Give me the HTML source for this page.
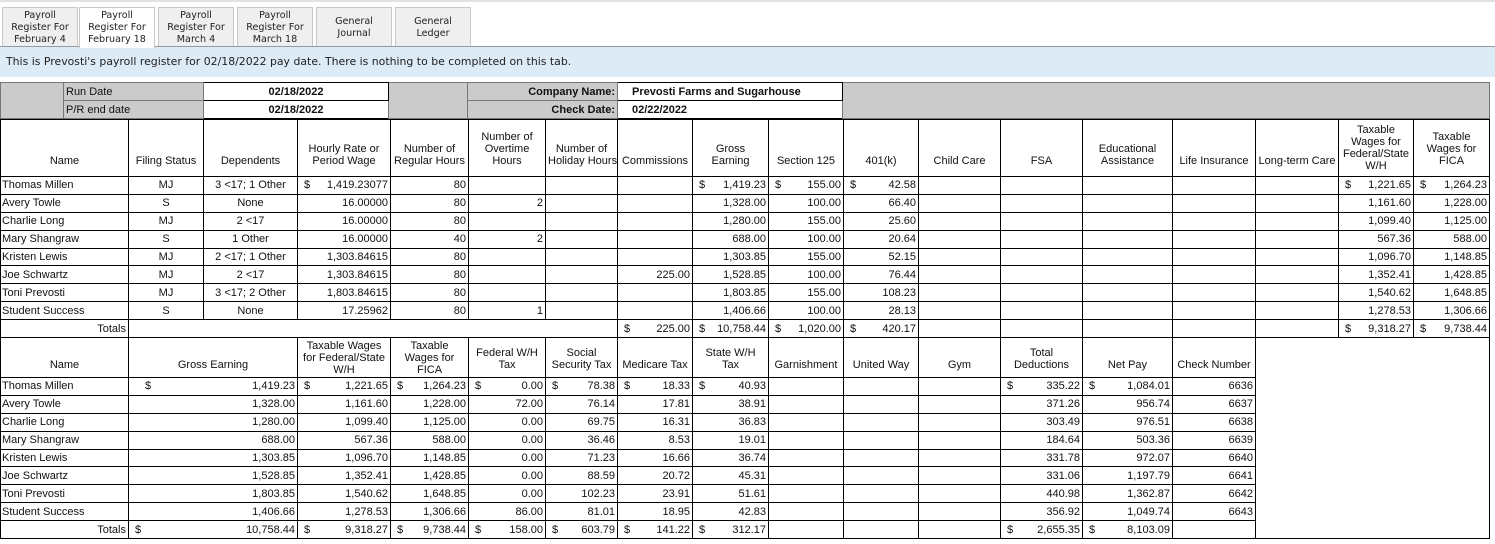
<!DOCTYPE html>
<html><head><meta charset="utf-8"><style>
*{box-sizing:border-box}
body{margin:0;width:1495px;height:544px;overflow:hidden;background:#fff;font-family:"Liberation Sans",Arial,sans-serif;font-size:11px;color:#111}
.topline{position:absolute;left:0;top:0;width:1495px;height:2px;background:#e2e2e2}
.tab{position:absolute;top:7px;height:40px;width:76px;background:#efefef;border:1px solid #c8c8c8;border-bottom:none;font-family:"DejaVu Sans",Verdana,sans-serif;font-size:9.6px;line-height:12px;text-align:center;display:flex;align-items:center;justify-content:center;color:#222}
.tab.act{background:#fff;height:41px;z-index:2}
.bar{position:absolute;left:0;top:46px;width:1495px;height:31px;background:#ddebf7;border-top:1px solid #999;font-family:"DejaVu Sans",Verdana,sans-serif;font-size:10.9px;line-height:30px;padding-left:6px;color:#222}
table{border-collapse:collapse;table-layout:fixed;position:absolute;left:0}
td{border:1px solid #000;padding:0 2px;white-space:nowrap;overflow:hidden}
#h{top:82px;width:1489px}
#h td{height:18px;font-weight:bold}
#h td.r{font-weight:normal}
.g{background:#cbcbcb;border-color:#777}
#m{top:119px;width:1489px}
#m td{height:17.9px;text-align:right}
#m tr.hd td{text-align:center;line-height:12px;vertical-align:bottom}
#m tr.hd1 td{height:57px;padding-bottom:9px}
#m tr.hd1 td.t4{padding-bottom:4px}
#m tr.hd2 td{height:40px;padding-bottom:6px}
#m tr.hd2 td.t3{padding-bottom:1px}
#m td.n{text-align:left;padding-left:1px}
.d{float:left;padding-left:4px}
.c{text-align:center!important}
</style></head><body>
<div class="topline"></div>
<div class="tab" style="left:2px">Payroll<br>Register For<br>February 4</div>
<div class="tab act" style="left:79px">Payroll<br>Register For<br>February 18</div>
<div class="tab" style="left:158px">Payroll<br>Register For<br>March 4</div>
<div class="tab" style="left:237px">Payroll<br>Register For<br>March 18</div>
<div class="tab" style="left:316px">General<br>Journal</div>
<div class="tab" style="left:395px">General<br>Ledger</div>
<div class="bar">This is Prevosti's payroll register for 02/18/2022 pay date. There is nothing to be completed on this tab.</div>

<table id="h">
<colgroup><col style="width:63px"><col style="width:140px"><col style="width:185px"><col style="width:79px"><col style="width:150px"><col style="width:225px"><col style="width:647px"></colgroup>
<tr><td class="g" rowspan="2"></td><td class="g r">Run Date</td><td style="text-align:center">02/18/2022</td><td class="g" rowspan="2"></td><td class="g" style="text-align:right">Company Name:</td><td style="padding-left:14px">Prevosti Farms and Sugarhouse</td><td class="g" rowspan="2"></td></tr>
<tr><td class="g r">P/R end date</td><td style="text-align:center">02/18/2022</td><td class="g" style="text-align:right">Check Date:</td><td style="padding-left:14px">02/22/2022</td></tr>
</table>

<table id="m">
<colgroup><col style="width:128px"><col style="width:75px"><col style="width:94px"><col style="width:93px"><col style="width:78px"><col style="width:77px"><col style="width:72px"><col style="width:75px"><col style="width:76px"><col style="width:75px"><col style="width:75px"><col style="width:82px"><col style="width:82px"><col style="width:90px"><col style="width:83px"><col style="width:83px"><col style="width:75px"><col style="width:76px"></colgroup>
<tr class="hd hd1"><td>Name</td><td>Filing Status</td><td>Dependents</td><td>Hourly Rate or<br>Period Wage</td><td>Number of<br>Regular Hours</td><td>Number of<br>Overtime<br>Hours</td><td>Number of<br>Holiday Hours</td><td>Commissions</td><td>Gross<br>Earning</td><td>Section 125</td><td>401(k)</td><td>Child Care</td><td>FSA</td><td>Educational<br>Assistance</td><td>Life Insurance</td><td>Long-term Care</td><td class="t4">Taxable<br>Wages for<br>Federal/State<br>W/H</td><td>Taxable<br>Wages for<br>FICA</td></tr>
<tr><td class="n">Thomas Millen</td><td class="c">MJ</td><td class="c">3 &lt;17; 1 Other</td><td><span class="d">$</span>1,419.23077</td><td>80</td><td></td><td></td><td></td><td><span class="d">$</span>1,419.23</td><td><span class="d">$</span>155.00</td><td><span class="d">$</span>42.58</td><td></td><td></td><td></td><td></td><td></td><td><span class="d">$</span>1,221.65</td><td><span class="d">$</span>1,264.23</td></tr>
<tr><td class="n">Avery Towle</td><td class="c">S</td><td class="c">None</td><td>16.00000</td><td>80</td><td>2</td><td></td><td></td><td>1,328.00</td><td>100.00</td><td>66.40</td><td></td><td></td><td></td><td></td><td></td><td>1,161.60</td><td>1,228.00</td></tr>
<tr><td class="n">Charlie Long</td><td class="c">MJ</td><td class="c">2 &lt;17</td><td>16.00000</td><td>80</td><td></td><td></td><td></td><td>1,280.00</td><td>155.00</td><td>25.60</td><td></td><td></td><td></td><td></td><td></td><td>1,099.40</td><td>1,125.00</td></tr>
<tr><td class="n">Mary Shangraw</td><td class="c">S</td><td class="c">1 Other</td><td>16.00000</td><td>40</td><td>2</td><td></td><td></td><td>688.00</td><td>100.00</td><td>20.64</td><td></td><td></td><td></td><td></td><td></td><td>567.36</td><td>588.00</td></tr>
<tr><td class="n">Kristen Lewis</td><td class="c">MJ</td><td class="c">2 &lt;17; 1 Other</td><td>1,303.84615</td><td>80</td><td></td><td></td><td></td><td>1,303.85</td><td>155.00</td><td>52.15</td><td></td><td></td><td></td><td></td><td></td><td>1,096.70</td><td>1,148.85</td></tr>
<tr><td class="n">Joe Schwartz</td><td class="c">MJ</td><td class="c">2 &lt;17</td><td>1,303.84615</td><td>80</td><td></td><td></td><td>225.00</td><td>1,528.85</td><td>100.00</td><td>76.44</td><td></td><td></td><td></td><td></td><td></td><td>1,352.41</td><td>1,428.85</td></tr>
<tr><td class="n">Toni Prevosti</td><td class="c">MJ</td><td class="c">3 &lt;17; 2 Other</td><td>1,803.84615</td><td>80</td><td></td><td></td><td></td><td>1,803.85</td><td>155.00</td><td>108.23</td><td></td><td></td><td></td><td></td><td></td><td>1,540.62</td><td>1,648.85</td></tr>
<tr><td class="n">Student Success</td><td class="c">S</td><td class="c">None</td><td>17.25962</td><td>80</td><td>1</td><td></td><td></td><td>1,406.66</td><td>100.00</td><td>28.13</td><td></td><td></td><td></td><td></td><td></td><td>1,278.53</td><td>1,306.66</td></tr>
<tr><td>Totals</td><td colspan="6"></td><td><span class="d">$</span>225.00</td><td><span class="d">$</span>10,758.44</td><td><span class="d">$</span>1,020.00</td><td><span class="d">$</span>420.17</td><td></td><td></td><td></td><td></td><td></td><td><span class="d">$</span>9,318.27</td><td><span class="d">$</span>9,738.44</td></tr>
<tr class="hd hd2"><td>Name</td><td colspan="2">Gross Earning</td><td class="t3">Taxable Wages<br>for Federal/State<br>W/H</td><td class="t3">Taxable<br>Wages for<br>FICA</td><td>Federal W/H<br>Tax</td><td>Social<br>Security Tax</td><td>Medicare Tax</td><td>State W/H<br>Tax</td><td>Garnishment</td><td>United Way</td><td>Gym</td><td>Total<br>Deductions</td><td>Net Pay</td><td>Check Number</td><td colspan="3" rowspan="11"></td></tr>
<tr><td class="n">Thomas Millen</td><td colspan="2"><span class="d" style="padding-left:14px">$</span>1,419.23</td><td><span class="d">$</span>1,221.65</td><td><span class="d">$</span>1,264.23</td><td><span class="d">$</span>0.00</td><td><span class="d">$</span>78.38</td><td><span class="d">$</span>18.33</td><td><span class="d">$</span>40.93</td><td></td><td></td><td></td><td><span class="d">$</span>335.22</td><td><span class="d">$</span>1,084.01</td><td>6636</td></tr>
<tr><td class="n">Avery Towle</td><td colspan="2">1,328.00</td><td>1,161.60</td><td>1,228.00</td><td>72.00</td><td>76.14</td><td>17.81</td><td>38.91</td><td></td><td></td><td></td><td>371.26</td><td>956.74</td><td>6637</td></tr>
<tr><td class="n">Charlie Long</td><td colspan="2">1,280.00</td><td>1,099.40</td><td>1,125.00</td><td>0.00</td><td>69.75</td><td>16.31</td><td>36.83</td><td></td><td></td><td></td><td>303.49</td><td>976.51</td><td>6638</td></tr>
<tr><td class="n">Mary Shangraw</td><td colspan="2">688.00</td><td>567.36</td><td>588.00</td><td>0.00</td><td>36.46</td><td>8.53</td><td>19.01</td><td></td><td></td><td></td><td>184.64</td><td>503.36</td><td>6639</td></tr>
<tr><td class="n">Kristen Lewis</td><td colspan="2">1,303.85</td><td>1,096.70</td><td>1,148.85</td><td>0.00</td><td>71.23</td><td>16.66</td><td>36.74</td><td></td><td></td><td></td><td>331.78</td><td>972.07</td><td>6640</td></tr>
<tr><td class="n">Joe Schwartz</td><td colspan="2">1,528.85</td><td>1,352.41</td><td>1,428.85</td><td>0.00</td><td>88.59</td><td>20.72</td><td>45.31</td><td></td><td></td><td></td><td>331.06</td><td>1,197.79</td><td>6641</td></tr>
<tr><td class="n">Toni Prevosti</td><td colspan="2">1,803.85</td><td>1,540.62</td><td>1,648.85</td><td>0.00</td><td>102.23</td><td>23.91</td><td>51.61</td><td></td><td></td><td></td><td>440.98</td><td>1,362.87</td><td>6642</td></tr>
<tr><td class="n">Student Success</td><td colspan="2">1,406.66</td><td>1,278.53</td><td>1,306.66</td><td>86.00</td><td>81.01</td><td>18.95</td><td>42.83</td><td></td><td></td><td></td><td>356.92</td><td>1,049.74</td><td>6643</td></tr>
<tr><td>Totals</td><td colspan="2"><span class="d">$</span>10,758.44</td><td><span class="d">$</span>9,318.27</td><td><span class="d">$</span>9,738.44</td><td><span class="d">$</span>158.00</td><td><span class="d">$</span>603.79</td><td><span class="d">$</span>141.22</td><td><span class="d">$</span>312.17</td><td></td><td></td><td></td><td><span class="d">$</span>2,655.35</td><td><span class="d">$</span>8,103.09</td><td></td></tr>
</table>
</body></html>
